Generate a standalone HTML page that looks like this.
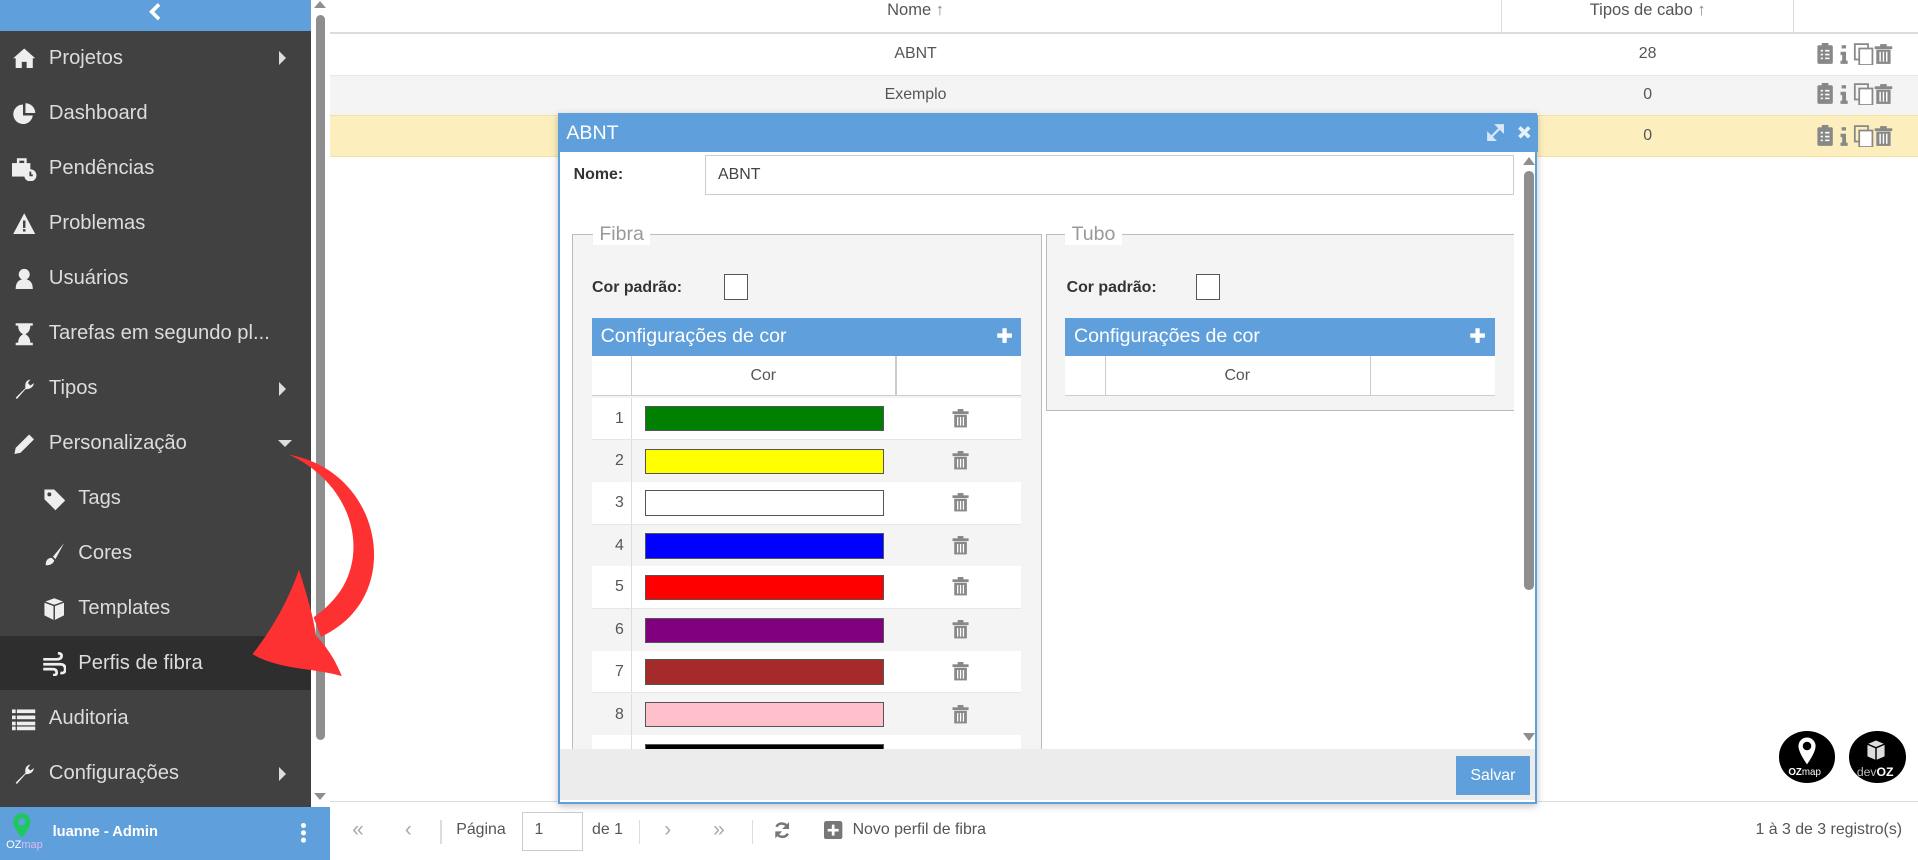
<!DOCTYPE html>
<html><head><meta charset="utf-8">
<style>
html,body{margin:0;padding:0;width:1918px;height:860px;overflow:hidden;background:#fff;}
#w{position:absolute;left:0;top:0;width:1568px;height:703px;zoom:1.22321;font-family:"Liberation Sans",sans-serif;color:#555;}
.a{position:absolute;}
.side{left:0;top:0;width:254px;height:660px;background:#414141;}
.mi{position:absolute;left:0;width:254px;height:45px;color:#dcdcdc;font-size:16.5px;line-height:45px;}
.mi .t{position:absolute;left:40px;}
.mi.s .t{left:64px;}
.mi .ic{position:absolute;left:10px;top:13px;width:20px;height:20px;}
.mi.s .ic{left:34px;}
.car{position:absolute;left:228px;top:17px;width:0;height:0;border-top:6px solid transparent;border-bottom:6px solid transparent;border-left:6px solid #ddd;}
.cell{position:absolute;font-size:13px;color:#555;text-align:center;}
.act{position:absolute;left:1482px;width:72px;height:18px;}
.tr{position:absolute;left:484px;width:351px;height:34px;border-bottom:1px solid #e6e6e6;}
.tr .n{position:absolute;left:0;width:32px;height:34px;border-right:1px solid #ddd;font-size:13px;line-height:34px;text-align:right;}
.tr .n span{margin-right:6px;}
.tr .c{position:absolute;left:43px;top:7px;width:194px;height:19px;border:1px solid #555;}
.tr .d{position:absolute;left:294px;top:9px;}
</style></head><body><div id="w">

<!-- sidebar -->
<div class="a side"></div>
<div class="a" style="left:0;top:0;width:254px;height:25px;background:#5fa0dc;"></div>
<svg class="a" style="left:121px;top:2px" width="12" height="16" viewBox="0 0 12 16"><path d="M9 2 L3 8 L9 14" stroke="#fff" stroke-width="3" fill="none"/></svg>
<div class="a" style="left:0;top:520px;width:254px;height:44px;background:#2e2e2e;"></div>

<div class="mi" style="top:25px"><svg class="ic" viewBox="0 0 20 20"><path d="M10 2 L1 10 L3 10 L3 18 L8 18 L8 13 L12 13 L12 18 L17 18 L17 10 L19 10 Z" fill="#eee"/></svg><span class="t">Projetos</span><i class="car"></i></div>
<div class="mi" style="top:70px"><svg class="ic" viewBox="0 0 20 20"><path d="M9 2 A8 8 0 1 0 17 11 L9 11 Z" fill="#eee"/><path d="M11 1 L11 9 L19 9 A8 8 0 0 0 11 1Z" fill="#eee"/></svg><span class="t">Dashboard</span></div>
<div class="mi" style="top:115px"><svg class="ic" viewBox="0 0 20 20"><rect x="0" y="5" width="15" height="11" fill="#eee"/><rect x="5" y="2" width="6" height="4" fill="none" stroke="#eee" stroke-width="2"/><circle cx="15" cy="15" r="5" fill="#eee"/><path d="M15 12 V15 H17" stroke="#414141" stroke-width="1.5" fill="none"/></svg><span class="t">Pendências</span></div>
<div class="mi" style="top:160px"><svg class="ic" viewBox="0 0 20 20"><path d="M10 1 L19 18 L1 18 Z" fill="#eee"/><rect x="9" y="7" width="2" height="6" fill="#414141"/><rect x="9" y="14" width="2" height="2" fill="#414141"/></svg><span class="t">Problemas</span></div>
<div class="mi" style="top:205px"><svg class="ic" viewBox="0 0 20 20"><circle cx="10" cy="6" r="4.5" fill="#eee"/><path d="M3 18 Q3 10 10 10 Q17 10 17 18Z" fill="#eee"/></svg><span class="t">Usuários</span></div>
<div class="mi" style="top:250px"><svg class="ic" viewBox="0 0 20 20"><path d="M3 1 H17 V3 H15 Q15 8 11 10 Q15 12 15 17 H17 V19 H3 V17 H5 Q5 12 9 10 Q5 8 5 3 H3Z" fill="#eee"/></svg><span class="t">Tarefas em segundo pl...</span></div>
<div class="mi" style="top:295px"><svg class="ic" viewBox="0 0 20 20"><path d="M3 17 L11 9 Q10 3 15 2 L13 5 L15 7 L18 5 Q17 10 11 10 L4 18Z" fill="#eee"/></svg><span class="t">Tipos</span><i class="car"></i></div>
<div class="mi" style="top:340px"><svg class="ic" viewBox="0 0 20 20"><path d="M2 18 L3 13 L14 2 L18 6 L7 17Z" fill="#eee"/></svg><span class="t">Personalização</span><i class="car" style="left:227px;top:20px;border-left:6px solid transparent;border-right:6px solid transparent;border-top:6px solid #ddd;border-bottom:0"></i></div>
<div class="mi s" style="top:385px"><svg class="ic" viewBox="0 0 20 20"><path d="M2 2 L10 2 L19 11 L11 19 L2 10Z" fill="#eee"/><circle cx="6" cy="6" r="1.6" fill="#414141"/></svg><span class="t">Tags</span></div>
<div class="mi s" style="top:430px"><svg class="ic" viewBox="0 0 20 20"><path d="M18 1 L9 12 L11 14 Z" fill="#eee"/><path d="M8 13 Q3 13 3 19 Q9 19 10 15Z" fill="#eee"/></svg><span class="t">Cores</span></div>
<div class="mi s" style="top:475px"><svg class="ic" viewBox="0 0 20 20"><path d="M10 1 L18 4 L18 15 L10 19 L2 15 L2 4Z" fill="#eee"/><path d="M2 4 L10 7 L18 4 M10 7 V19" stroke="#414141" stroke-width="1.2" fill="none"/></svg><span class="t">Templates</span></div>
<div class="mi s" style="top:520px"><svg class="ic" viewBox="0 0 20 20"><path d="M1 6 H12 Q16 6 16 3 Q16 1 13 1 M1 10 H15 Q19 10 19 14 Q19 18 15 17 M1 14 H9 Q12 14 12 17 Q12 19 9 19" stroke="#eee" stroke-width="2.2" fill="none"/></svg><span class="t">Perfis de fibra</span></div>
<div class="mi" style="top:565px"><svg class="ic" viewBox="0 0 20 20"><rect x="0" y="2" width="3" height="3" fill="#eee"/><rect x="4" y="2" width="15" height="3" fill="#eee"/><rect x="0" y="7" width="3" height="3" fill="#eee"/><rect x="4" y="7" width="15" height="3" fill="#eee"/><rect x="0" y="12" width="3" height="3" fill="#eee"/><rect x="4" y="12" width="15" height="3" fill="#eee"/><rect x="0" y="16" width="3" height="3" fill="#eee"/><rect x="4" y="16" width="15" height="3" fill="#eee"/></svg><span class="t">Auditoria</span></div>
<div class="mi" style="top:610px"><svg class="ic" viewBox="0 0 20 20"><path d="M3 17 L11 9 Q10 3 15 2 L13 5 L15 7 L18 5 Q17 10 11 10 L4 18Z" fill="#eee"/></svg><span class="t">Configurações</span><i class="car"></i></div>

<!-- sidebar scrollbar -->
<div class="a" style="left:254px;top:0;width:16px;height:660px;background:#fff;"></div>
<div class="a" style="left:258px;top:12px;width:8px;height:593px;background:#8e8e8e;border-radius:4px;"></div>
<div class="a" style="left:257px;top:1px;border-left:5px solid transparent;border-right:5px solid transparent;border-bottom:6px solid #8e8e8e;"></div>
<div class="a" style="left:257px;top:648px;border-left:5px solid transparent;border-right:5px solid transparent;border-top:6px solid #8e8e8e;"></div>

<!-- user bar -->
<div class="a" style="left:0;top:660px;width:270px;height:43px;background:#5fa0dc;"></div>
<svg class="a" style="left:10px;top:664px" width="16" height="22" viewBox="0 0 16 22"><path d="M8 1 A7 7 0 0 1 15 8 Q15 13 8 21 Q1 13 1 8 A7 7 0 0 1 8 1Z" fill="#1ec85a"/><circle cx="8" cy="8" r="3" fill="#5fa0dc"/></svg>
<div class="a" style="left:5px;top:686px;font-size:9px;color:#fff;">OZ<span style="color:#dbe">map</span></div>
<div class="a" style="left:43px;top:674px;font-size:12px;font-weight:bold;color:#fff;">luanne - Admin</div>
<div class="a" style="left:246px;top:673px;width:4px;height:4px;background:#fff;border-radius:2px;box-shadow:0 6px 0 #fff,0 12px 0 #fff;"></div>

<!-- main table -->
<div class="a" style="left:270px;top:26px;width:1298px;height:2px;background:#ddd;"></div>
<div class="a" style="left:1227px;top:0;width:1px;height:26px;background:#ddd;"></div>
<div class="a" style="left:1466px;top:0;width:1px;height:26px;background:#ddd;"></div>
<div class="cell" style="left:270px;width:957px;top:1px;font-size:13.5px;">Nome <span style="color:#888">&#x2191;</span></div>
<div class="cell" style="left:1228px;width:238px;top:1px;font-size:13.5px;">Tipos de cabo <span style="color:#888">&#x2191;</span></div>

<div class="a" style="left:270px;top:28px;width:1298px;height:33px;background:#fff;border-bottom:1px solid #e8e8e8;"></div>
<div class="a" style="left:270px;top:62px;width:1298px;height:32px;background:#f4f4f4;"></div>
<div class="a" style="left:270px;top:94px;width:1298px;height:33px;background:#fdefbd;border-top:1px solid #f4e0a0;border-bottom:1px solid #f4e0a0;"></div>
<div class="cell" style="left:270px;width:957px;top:37px;">ABNT</div>
<div class="cell" style="left:270px;width:957px;top:70px;">Exemplo</div>
<div class="cell" style="left:1228px;width:238px;top:37px;">28</div>
<div class="cell" style="left:1228px;width:238px;top:70px;">0</div>
<div class="cell" style="left:1228px;width:238px;top:104px;">0</div>

<svg width="0" height="0" style="position:absolute"><defs>
<g id="acts">
<rect x="0" y="2" width="14" height="17" rx="1.5" fill="#888"/><rect x="4" y="0" width="6" height="4" fill="#888"/>
<path d="M3 7 H5 M7 7 H11 M3 10.5 H5 M7 10.5 H11 M3 14 H5 M7 14 H11" stroke="#fff" stroke-width="1.4"/>
<rect x="22" y="2" width="4" height="3" fill="#888"/><path d="M21 8 H26 V16 H27.5 V19 H21 V16 H22.5 V11 H21Z" fill="#888"/>
<rect x="34" y="1" width="12" height="14" fill="none" stroke="#888" stroke-width="1.6"/>
<rect x="38" y="5" width="12" height="15" fill="#fff" stroke="#888" stroke-width="1.6"/>
<rect x="52" y="3" width="16" height="2.5" fill="#888"/><rect x="57" y="1" width="6" height="2.5" fill="#888"/>
<path d="M53.5 6 H66.5 V19 H53.5Z" fill="#888"/><path d="M57 8 V17 M60 8 V17 M63 8 V17" stroke="#fff" stroke-width="1.3"/>
</g>
<g id="trash"><rect x="0" y="2" width="14" height="2.4" fill="#888"/><rect x="4.5" y="0" width="5" height="2.4" fill="#888"/><path d="M1.5 5 H12.5 V16 H1.5Z" fill="#888"/><path d="M4.5 7 V14.5 M7 7 V14.5 M9.5 7 V14.5" stroke="#fff" stroke-width="1.1"/></g>
</defs></svg>
<svg class="act" style="top:35px" viewBox="0 0 72 20"><use href="#acts"/></svg>
<svg class="act" style="top:68px" viewBox="0 0 72 20"><use href="#acts"/></svg>
<svg class="act" style="top:102px" viewBox="0 0 72 20"><use href="#acts"/></svg>

<!-- footer -->
<div class="a" style="left:270px;top:655px;width:1298px;height:1px;background:#ddd;"></div>
<div class="a" style="left:288px;top:669px;font-size:17px;color:#aaa;">&#xAB;</div>
<div class="a" style="left:331px;top:669px;font-size:17px;color:#aaa;">&#x2039;</div>
<div class="a" style="left:360px;top:670px;width:1px;height:20px;background:#ddd;"></div>
<div class="a" style="left:373px;top:671px;font-size:13px;">Página</div>
<div class="a" style="left:427px;top:664px;width:48px;height:30px;border:1px solid #ccc;"></div>
<div class="a" style="left:437px;top:671px;font-size:13px;">1</div>
<div class="a" style="left:484px;top:671px;font-size:13px;">de 1</div>
<div class="a" style="left:522px;top:670px;width:1px;height:20px;background:#ddd;"></div>
<div class="a" style="left:543px;top:669px;font-size:17px;color:#aaa;">&#x203A;</div>
<div class="a" style="left:583px;top:669px;font-size:17px;color:#aaa;">&#xBB;</div>
<div class="a" style="left:615px;top:670px;width:1px;height:20px;background:#ddd;"></div>
<svg class="a" style="left:632px;top:671px" width="15" height="15" viewBox="0 0 16 16"><path d="M13 6 A5.5 5.5 0 0 0 3 5 M3 10 A5.5 5.5 0 0 0 13 11" stroke="#777" stroke-width="2.2" fill="none"/><path d="M14 1 V7 H8Z M2 15 V9 H8Z" fill="#777"/></svg>
<svg class="a" style="left:674px;top:671px" width="15" height="15" viewBox="0 0 15 15"><rect width="15" height="15" rx="2" fill="#777"/><path d="M7.5 3 V12 M3 7.5 H12" stroke="#fff" stroke-width="2.2"/></svg>
<div class="a" style="left:697px;top:671px;font-size:13px;">Novo perfil de fibra</div>
<div class="a" style="left:1400px;top:671px;width:155px;text-align:right;font-size:13px;">1 à 3 de 3 registro(s)</div>

<!-- logos -->
<div class="a" style="left:1454px;top:598px;width:46px;height:42px;border-radius:50%;background:#000;"></div>
<svg class="a" style="left:1468px;top:601px" width="18" height="26" viewBox="0 0 18 26"><path d="M9 2 A7 7 0 0 1 16 9 Q16 14 9 24 Q2 14 2 9 A7 7 0 0 1 9 2Z" fill="#fff"/><circle cx="9" cy="9" r="3.5" fill="#000"/></svg>
<div class="a" style="left:1462px;top:627px;font-size:8px;color:#fff;font-weight:bold;">OZ<span style="font-weight:normal">map</span></div>
<div class="a" style="left:1512px;top:598px;width:46px;height:42px;border-radius:50%;background:#000;"></div>
<svg class="a" style="left:1525px;top:603px" width="18" height="20" viewBox="0 0 18 20"><path d="M2 5 L9 2 L16 5 L16 15 L9 18 L2 15Z" fill="#ddd"/><path d="M2 5 L9 8 L16 5 M9 8 V18" stroke="#000" stroke-width="1.2" fill="none"/></svg>
<div class="a" style="left:1518px;top:625px;font-size:10px;color:#bbb;">dev<b style="color:#fff">OZ</b></div>

<!-- modal -->
<div class="a" style="left:456px;top:92px;width:797px;height:562px;border:2px solid #5fa0dc;background:#fff;box-shadow:0 2px 6px rgba(0,0,0,.25);"></div>
<div class="a" style="left:458px;top:94px;width:799px;height:30px;background:#5fa0dc;"></div>
<div class="a" style="left:463px;top:100px;font-size:16px;color:#fff;">ABNT</div>
<svg class="a" style="left:1216px;top:101px" width="14" height="14" viewBox="0 0 14 14"><path d="M8 1 H13 V6 Z M1 8 V13 H6Z M12 2 L2 12" stroke="#d8e8f8" stroke-width="1.8" fill="#d8e8f8"/></svg>
<svg class="a" style="left:1240px;top:102px" width="12" height="12" viewBox="0 0 12 12"><path d="M2 2 L10 10 M10 2 L2 10" stroke="#e8f0fa" stroke-width="3"/></svg>

<div class="a" style="left:469px;top:136px;font-size:13px;font-weight:bold;color:#333;">Nome:</div>
<div class="a" style="left:576px;top:127px;width:660px;height:31px;border:1px solid #ccc;background:#fff;"></div>
<div class="a" style="left:587px;top:136px;font-size:13px;color:#444;">ABNT</div>

<!-- modal scrollbar -->
<div class="a" style="left:1246px;top:140px;width:8px;height:342px;background:#8e8e8e;border-radius:4px;"></div>
<div class="a" style="left:1245px;top:128px;border-left:5px solid transparent;border-right:5px solid transparent;border-bottom:7px solid #8e8e8e;"></div>
<div class="a" style="left:1245px;top:599px;border-left:5px solid transparent;border-right:5px solid transparent;border-top:7px solid #8e8e8e;"></div>

<!-- Fibra fieldset -->
<div class="a" style="left:468px;top:191px;width:382px;height:421px;background:#f4f4f4;border:1px solid #bbb;border-bottom:0;"></div>
<div class="a" style="left:485px;top:182px;padding:0 5px;background:#fff;font-size:16px;color:#999;line-height:18px;">Fibra</div>
<div class="a" style="left:484px;top:228px;font-size:13px;font-weight:bold;color:#333;">Cor padrão:</div>
<div class="a" style="left:592px;top:224px;width:18px;height:20px;border:1px solid #555;background:#fff;"></div>
<div class="a" style="left:484px;top:260px;width:351px;height:31px;background:#5fa0dc;"></div>
<div class="a" style="left:491px;top:266px;font-size:16px;color:#fff;">Configurações de cor</div>
<svg class="a" style="left:814px;top:267px" width="14" height="14" viewBox="0 0 14 14"><path d="M7 1 V13 M1 7 H13" stroke="#fff" stroke-width="3.5"/></svg>
<div class="a" style="left:484px;top:291px;width:351px;height:32px;background:#fff;border-bottom:1px solid #ccc;"></div>
<div class="a" style="left:516px;top:291px;width:1px;height:33px;background:#ccc;"></div>
<div class="a" style="left:732px;top:291px;width:1px;height:33px;background:#ccc;"></div>
<div class="a" style="left:516px;top:300px;width:216px;text-align:center;font-size:13px;">Cor</div>

<div class="tr" style="top:325px;background:#fff"><div class="n"><span>1</span></div><div class="c" style="background:#008000"></div><svg class="d" width="14" height="16" viewBox="0 0 14 17"><use href="#trash"/></svg></div>
<div class="tr" style="top:360px;background:#f4f4f4"><div class="n"><span>2</span></div><div class="c" style="background:#ffff00"></div><svg class="d" width="14" height="16" viewBox="0 0 14 17"><use href="#trash"/></svg></div>
<div class="tr" style="top:394px;background:#fff"><div class="n"><span>3</span></div><div class="c" style="background:#fff"></div><svg class="d" width="14" height="16" viewBox="0 0 14 17"><use href="#trash"/></svg></div>
<div class="tr" style="top:429px;background:#f4f4f4"><div class="n"><span>4</span></div><div class="c" style="background:#0000ff"></div><svg class="d" width="14" height="16" viewBox="0 0 14 17"><use href="#trash"/></svg></div>
<div class="tr" style="top:463px;background:#fff"><div class="n"><span>5</span></div><div class="c" style="background:#ff0000"></div><svg class="d" width="14" height="16" viewBox="0 0 14 17"><use href="#trash"/></svg></div>
<div class="tr" style="top:498px;background:#f4f4f4"><div class="n"><span>6</span></div><div class="c" style="background:#800080"></div><svg class="d" width="14" height="16" viewBox="0 0 14 17"><use href="#trash"/></svg></div>
<div class="tr" style="top:532px;background:#fff"><div class="n"><span>7</span></div><div class="c" style="background:#a52a2a"></div><svg class="d" width="14" height="16" viewBox="0 0 14 17"><use href="#trash"/></svg></div>
<div class="tr" style="top:567px;background:#f4f4f4"><div class="n"><span>8</span></div><div class="c" style="background:#ffc0cb"></div><svg class="d" width="14" height="16" viewBox="0 0 14 17"><use href="#trash"/></svg></div>
<div class="tr" style="top:601px;background:#fff;height:11px;overflow:hidden;border:0"><div class="n"></div><div class="c" style="background:#000"></div></div>

<!-- Tubo fieldset -->
<div class="a" style="left:855px;top:191px;width:382px;height:143px;background:#f4f4f4;border:1px solid #bbb;border-right:0;"></div>
<div class="a" style="left:871px;top:182px;padding:0 5px;background:#fff;font-size:16px;color:#999;line-height:18px;">Tubo</div>
<div class="a" style="left:872px;top:228px;font-size:13px;font-weight:bold;color:#333;">Cor padrão:</div>
<div class="a" style="left:978px;top:224px;width:18px;height:20px;border:1px solid #555;background:#fff;"></div>
<div class="a" style="left:871px;top:260px;width:351px;height:31px;background:#5fa0dc;"></div>
<div class="a" style="left:878px;top:266px;font-size:16px;color:#fff;">Configurações de cor</div>
<svg class="a" style="left:1201px;top:267px" width="14" height="14" viewBox="0 0 14 14"><path d="M7 1 V13 M1 7 H13" stroke="#fff" stroke-width="3.5"/></svg>
<div class="a" style="left:871px;top:291px;width:351px;height:32px;background:#fff;border-bottom:1px solid #ccc;"></div>
<div class="a" style="left:903px;top:291px;width:1px;height:33px;background:#ccc;"></div>
<div class="a" style="left:1120px;top:291px;width:1px;height:33px;background:#ccc;"></div>
<div class="a" style="left:903px;top:300px;width:217px;text-align:center;font-size:13px;">Cor</div>

<!-- modal footer -->
<div class="a" style="left:458px;top:612px;width:797px;height:42px;background:#ececec;"></div>
<div class="a" style="left:1190px;top:618px;width:61px;height:32px;background:#5fa0dc;color:#fff;font-size:13px;line-height:32px;text-align:center;">Salvar</div>

<!-- red arrow -->
<svg class="a" style="left:195px;top:360px" width="130" height="200" viewBox="195 360 130 200">
<path d="M236 372 C305 385 325 465 285 505 C278 512 270 517 262 521 L256 505 C266 498 274 490 280 480 C300 445 285 395 236 372Z" fill="#fd3131"/>
<path d="M206 535 C222 515 236 490 244 466 C250 485 256 505 258 520 C266 528 274 540 279 553 C255 546 228 548 206 535Z" fill="#fd3131"/>
</svg>

</div></body></html>
